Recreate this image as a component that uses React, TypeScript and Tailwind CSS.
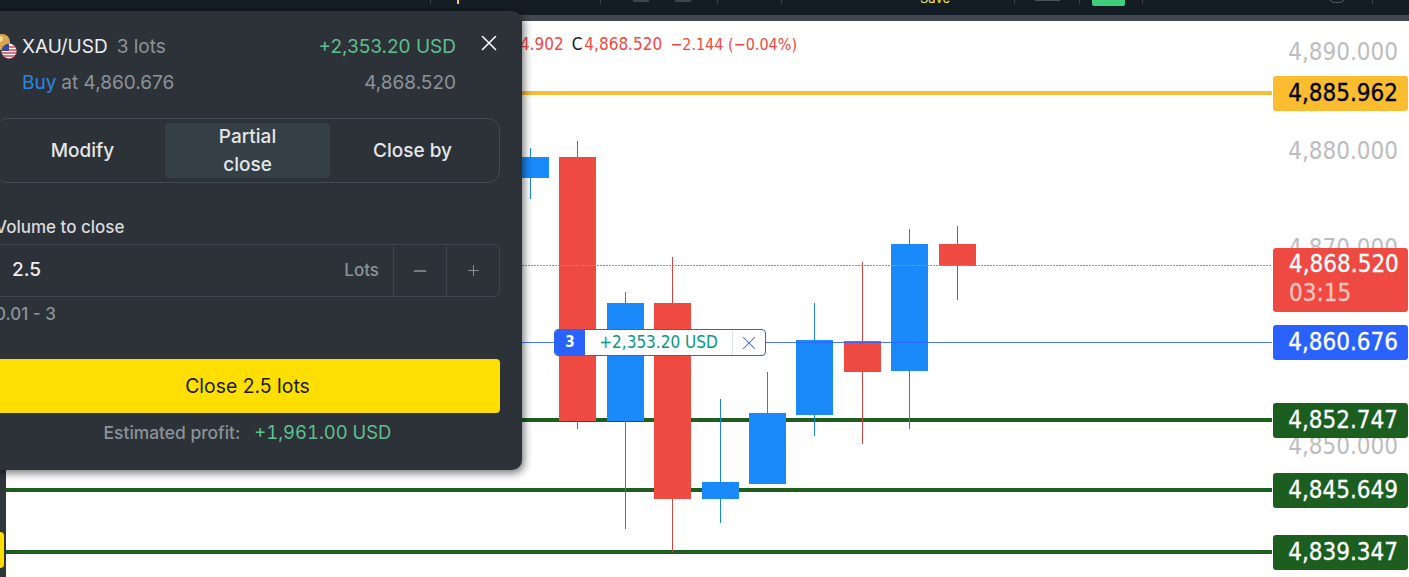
import React from 'react';
import { X, Minus, Plus } from 'lucide-react';

const candles = [
  { x: 512, top: 157, bottom: 178, high: 148, low: 199, up: true },
  { x: 559, top: 157, bottom: 421, high: 141, low: 429, up: false },
  { x: 607, top: 303, bottom: 421, high: 292, low: 529, up: true },
  { x: 654, top: 303, bottom: 499, high: 257, low: 552, up: false },
  { x: 702, top: 482, bottom: 499, high: 399, low: 523, up: true },
  { x: 749, top: 413, bottom: 484, high: 372, low: 484, up: true },
  { x: 796, top: 340, bottom: 415, high: 303, low: 436, up: true },
  { x: 844, top: 341, bottom: 372, high: 262, low: 444, up: false },
  { x: 891, top: 244, bottom: 371, high: 229, low: 429, up: true },
  { x: 939, top: 244, bottom: 266, high: 226, low: 300, up: false },
];

const axisTicks = [
  { label: '4,890.000', y: 52 },
  { label: '4,880.000', y: 151 },
  { label: '4,870.000', y: 248 },
  { label: '4,850.000', y: 446 },
];

const priceTags = [
  { label: '4,885.962', top: 76, cls: 'bg-[#fbbc2f] text-black' },
  { label: '4,860.676', top: 325, cls: 'bg-[#2962ff] text-white' },
  { label: '4,852.747', top: 403, cls: 'bg-[#1b5e20] text-white' },
  { label: '4,845.649', top: 473, cls: 'bg-[#1b5e20] text-white' },
  { label: '4,839.347', top: 535, cls: 'bg-[#1b5e20] text-white' },
];

const axisFont = "font-['DejaVu_Sans',sans-serif] [font-stretch:condensed]";

const TopBar = () => (
  <div className="flex h-[15px] shrink-0 items-start overflow-hidden bg-[#141d25]">
    <div className="ml-[430px] h-[4px] w-px bg-[#39424a]" />
    <div className="ml-[26px] h-[4px] w-[2px] bg-[#e8d44a]" />
    <div className="ml-[141px] h-[4px] w-px bg-[#39424a]" />
    <div className="ml-[32px] h-[2px] w-[16px] bg-[#3c444c]" />
    <div className="ml-[26px] h-[2px] w-[16px] bg-[#3c444c]" />
    <div className="ml-[26px] h-[4px] w-px bg-[#39424a]" />
    <div className="ml-[63px] h-[4px] w-px bg-[#39424a]" />
    <div className="ml-[138px] -mt-[9px] w-[30px] font-[Inter,sans-serif] text-[13px] leading-[15px] text-[#f2e33c]">Save</div>
    <div className="ml-[64px] h-[4px] w-px bg-[#39424a]" />
    <div className="ml-[20px] h-[1px] w-[25px] bg-[#4a525a]" />
    <div className="ml-[19px] h-[4px] w-px bg-[#39424a]" />
    <div className="ml-[12px] h-[6px] w-[33px] rounded-b-[2px] bg-[#3ecf7c]" />
    <div className="ml-[17px] h-[4px] w-px bg-[#39424a]" />
    <div className="ml-[184px] -mt-[14px] h-[17px] w-[20px] rounded-full border border-[#59616a]" />
    <div className="ml-[25px] h-[4px] w-px bg-[#39424a]" />
  </div>
);

const ChartDrawing = () => (
  <svg className="absolute inset-0" width="1403" height="556" viewBox="6 21 1403 556">
    <rect x="522" y="91" width="750" height="4" fill="#f7bd35" />
    <rect x="6" y="418" width="1266" height="4" fill="#1b5e20" />
    <rect x="6" y="488" width="1266" height="4" fill="#1b5e20" />
    <rect x="6" y="550" width="1266" height="4" fill="#1b5e20" />
    {candles.map((c) => (
      <g key={c.x}>
        <rect x={c.x + 18} y={c.high} width="1" height={c.low - c.high} fill={c.up ? '#1a84e6' : '#d0453f'} />
        <rect x={c.x} y={c.top} width="37" height={c.bottom - c.top} fill={c.up ? '#1a8afa' : '#ef4a41'} />
      </g>
    ))}
    <line x1="522" x2="1272" y1="265.5" y2="265.5" stroke="#ef6a64" strokeDasharray="2 1" />
    <rect x="522" y="342" width="750" height="1" fill="#2962ff" fillOpacity="0.85" />
  </svg>
);

const PositionTag = () => (
  <div
    className={`absolute left-[548px] top-[308px] flex h-[27px] w-[212px] overflow-hidden rounded-[4px] border border-[#2f63e0] bg-white ${axisFont}`}
  >
    <div className="flex w-[30px] items-center justify-center bg-[#2962ff] text-[15px] font-bold text-white">3</div>
    <div className="flex flex-1 items-center justify-center pt-px text-[17px] text-[#089981]">+2,353.20 USD</div>
    <div className="flex w-[33px] items-center justify-center border-l border-[#dce6f5] text-[#3a62d8]">
      <X size={22} strokeWidth={1.1} />
    </div>
  </div>
);

const CoinIcon = () => (
  <svg width="27" height="26" viewBox="0 0 27 26" className="shrink-0">
    <circle cx="7" cy="9" r="8" fill="#d9a550" />
    <circle cx="5" cy="6" r="3" fill="#f3d48a" />
    <circle cx="14" cy="18" r="7.5" fill="#f4f4f4" />
    <path d="M7.5 14h13M6.5 17h15M6.5 20h15M8 23h12" stroke="#d5454c" strokeWidth="1.6" />
    <path d="M6.5 18a7.5 7.5 0 0 1 7.5-7.5V18z" fill="#3b4a8c" />
  </svg>
);

const OrderPanel = () => (
  <div className="absolute left-[-27px] top-[11px] h-[459px] w-[549px] rounded-[10px] bg-[#2c3238] px-[22px] pt-[22px] font-[Inter,sans-serif] shadow-[2px_3px_8px_rgba(0,0,0,0.55)]">
    <div className="flex h-[26px] items-center text-[19px]">
      <CoinIcon />
      <span className="pt-[2px] text-[#eceef0]">XAU/USD</span>
      <span className="ml-[9px] pt-[2px] text-[#8d9298]">3 lots</span>
      <span className="ml-auto pt-[2px] text-[#5fc08f]">+2,353.20 USD</span>
      <div className="flex h-full w-[44px] items-start justify-end text-white">
        <X size={26} strokeWidth={1.5} className="-mr-[2px] -mt-[3px]" />
      </div>
    </div>
    <div className="mt-[10px] flex h-[26px] items-center pl-[27px] pr-[44px] pt-[2px] text-[19px] text-[#8d9298]">
      <span className="text-[#2a87e0]">Buy</span>
      <span className="ml-[5px]">at 4,860.676</span>
      <span className="ml-auto">4,868.520</span>
    </div>

    <div className="mt-[23px] flex h-[65px] rounded-[12px] border border-[#434a51] p-[4px] text-[19px] font-medium leading-[28px] text-[#e4e6e8]">
      <div className="flex flex-1 items-center justify-center">Modify</div>
      <div className="flex flex-1 items-center justify-center rounded-[4px] bg-[#353f46] text-center">
        Partial
        <br />
        close
      </div>
      <div className="flex flex-1 items-center justify-center">Close by</div>
    </div>

    <div className="mt-[32px] h-[24px] text-[17px] font-medium leading-[24px] text-[#d9dbde]">Volume to close</div>
    <div className="mt-[5px] flex h-[53px] rounded-[6px] border border-[#3f464d]">
      <div className="flex flex-1 items-center pl-[16px] text-[19px] font-medium text-[#eceef0]">2.5</div>
      <div className="flex items-center pr-[14px] text-[17px] font-medium text-[#8d9298]">Lots</div>
      <div className="flex w-[53px] items-center justify-center border-l border-[#3f464d] text-[#8d9298]">
        <Minus size={20} strokeWidth={1.6} />
      </div>
      <div className="flex w-[53px] items-center justify-center border-l border-[#3f464d] text-[#8d9298]">
        <Plus size={17} strokeWidth={1.4} />
      </div>
    </div>
    <div className="mt-[5px] h-[24px] text-[17px] font-medium leading-[24px] text-[#8d9298]">0.01 - 3</div>

    <div className="mt-[33px] flex h-[54px] items-center justify-center rounded-[4px] bg-[#ffde02] pt-[2px] text-[19.4px] text-[#1c1a10]">
      Close 2.5 lots
    </div>
    <div className="mt-[6px] flex h-[26px] items-center justify-center gap-[14px] pt-[2px]">
      <span className="text-[17.4px] font-medium text-[#8d9298]">Estimated profit:</span>
      <span className="text-[18.4px] tabular-nums text-[#5fc08f]">+1,961.00 USD</span>
    </div>
  </div>
);

export default function App() {
  return (
    <div className="relative flex h-screen w-full flex-col overflow-hidden bg-white">
      <TopBar />
      <div className="h-[6px] shrink-0 bg-[#42474b]" />
      <div className="flex min-h-0 flex-1">
        <div className="flex w-[6px] shrink-0 flex-col bg-[#2f363c] pt-[511px]">
          <div className="h-[36px] w-[4px] rounded-r-[4px] bg-[#ffde02]" />
        </div>
        <div className="relative flex-1 overflow-hidden bg-white">
          <ChartDrawing />

          <div className={`absolute right-[612px] top-[13px] whitespace-nowrap text-[17px] leading-[20px] text-[#ef4a41] ${axisFont}`}>
            4,864.902<span className="ml-[8px] mr-[2px] text-[#131722]">C</span>4,868.520
            <span className="ml-[8px] text-[16px]">−2.144 (−0.04%)</span>
          </div>

          {axisTicks.map((t) => (
            <div
              key={t.label}
              className={`absolute right-[11px] -translate-y-1/2 text-[24px] leading-[30px] text-[#bdbdbd] ${axisFont}`}
              style={{ top: t.y - 21 }}
            >
              {t.label}
            </div>
          ))}

          {priceTags.map((t) => (
            <div
              key={t.label}
              className={`absolute right-[1px] flex h-[35px] w-[135px] items-center justify-end rounded-[3px] pb-[2px] pr-[10px] text-[24px] [-webkit-text-stroke:0.3px_currentColor] ${axisFont} ${t.cls}`}
              style={{ top: t.top - 21 }}
            >
              {t.label}
            </div>
          ))}

          <div className={`absolute right-[1px] top-[227px] flex h-[64px] w-[135px] flex-col justify-center rounded-[3px] bg-[#ef4a41] pb-[3px] pl-[16px] text-[24px] leading-[29px] text-white [-webkit-text-stroke:0.3px_currentColor] ${axisFont}`}>
            <span>4,868.520</span>
            <span className="text-[#fbc3bf]">03:15</span>
          </div>

          <PositionTag />
        </div>
      </div>
      <OrderPanel />
    </div>
  );
}
